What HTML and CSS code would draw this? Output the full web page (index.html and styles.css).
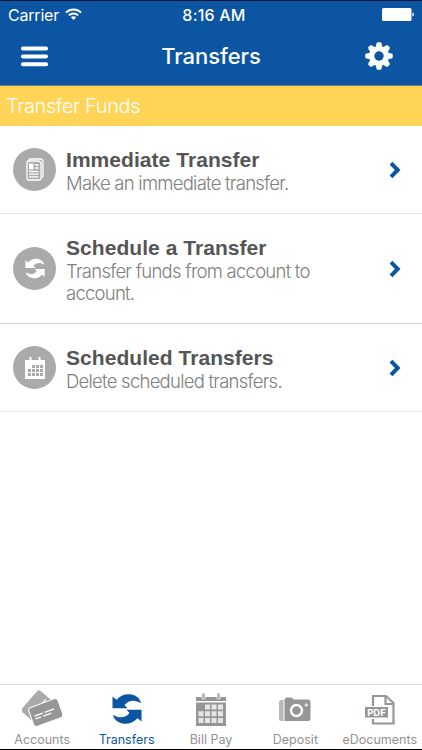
FILE: index.html
```html
<!DOCTYPE html>
<html lang="en">
<head>
  <meta charset="UTF-8">
  <meta name="viewport" content="width=device-width, initial-scale=1">
  <title>Transfers</title>
  <link rel="stylesheet" href="styles.css">
</head>
<body>
  <svg class="sprite" width="0" height="0">
    <symbol id="swap" viewBox="0 0 30 30">
      <path d="M.5 2.500L4.500 5.800C9 .8 14.500-.3 19.500.6C24.500 1.500 28 4.600 29 9.200C23 5.200 16.500 6 12.500 11L15.500 14.300H.5Z"/>
      <path d="M29.500 27.500L25.500 24.200C21 29.200 15.500 30.300 10.500 29.400C5.500 28.500 2 25.400 1 20.800C7 24.800 13.500 24 17.500 19L14.500 15.700H29.500Z"/>
    </symbol>
    <symbol id="chevron" viewBox="0 0 12 18">
      <path d="M2 2.200L8.700 9L2 15.800" fill="none" stroke="#0b55a2" stroke-width="4"/>
    </symbol>
  </svg>

  <div class="app">
    <header class="header">
      <div class="status">
        <div class="carrier">
          <span class="carrier-name">Carrier</span>
          <svg width="17" height="13" viewBox="0 0 17 13" fill="none" stroke="#fff" stroke-width="2">
            <path d="M1 4.500C5 .4 12 .4 16 4.500M3.800 7.400C6.500 4.800 10.500 4.800 13.200 7.400"/>
            <path d="M5.800 9.300C7.400 7.900 9.600 7.900 11.200 9.300L8.500 12Z" fill="#fff" stroke="none"/>
          </svg>
        </div>
        <span class="time">8:16 AM</span>
        <svg class="battery" width="33" height="13" viewBox="0 0 33 13" fill="#fff">
          <rect width="29.500" height="13" rx="1.500"/>
          <path d="M30.500 4.500Q32 5 32 6.500T30.500 8.500Z"/>
        </svg>
      </div>
      <div class="nav">
        <svg width="27" height="21" viewBox="0 0 27 21" fill="#fff">
          <rect y="0.500" width="27" height="4" rx="1.800"/>
          <rect y="8.400" width="27" height="4" rx="1.800"/>
          <rect y="16.300" width="27" height="4" rx="1.800"/>
        </svg>
        <h1 class="nav-title">Transfers</h1>
        <svg width="28" height="28" viewBox="-14 -14 28 28">
          <g fill="#fff">
            <circle r="9.500"/>
            <path id="tooth" d="M-3.800-8L-2.200-13.400Q0-14.200 2.200-13.400L3.800-8Z"/>
            <use href="#tooth" transform="rotate(45)"/>
            <use href="#tooth" transform="rotate(90)"/>
            <use href="#tooth" transform="rotate(135)"/>
            <use href="#tooth" transform="rotate(180)"/>
            <use href="#tooth" transform="rotate(225)"/>
            <use href="#tooth" transform="rotate(270)"/>
            <use href="#tooth" transform="rotate(315)"/>
          </g>
          <circle r="4.700" fill="#0b55a2"/>
        </svg>
      </div>
    </header>

    <h2 class="section">Transfer Funds</h2>

    <main class="list">
      <a class="row">
        <span class="badge">
          <svg width="18" height="23" viewBox="0 0 18 23" fill="none" stroke="#fff" stroke-width="1.300">
            <path d="M3 3V2Q3 1 4 1H14Q17 1 17 4.500V18Q17 19 16 19"/>
            <path d="M2.500 3H11.500Q15 3 15 6V20.500Q15 22 13.500 22H2.500Q1 22 1 20.500V4.500Q1 3 2.500 3Z"/>
            <path d="M3 5.500H7.500V11.500H3Z" fill="#fff" stroke="none"/>
            <path d="M9 7H12.500M9 10H12.500M3 13.500H12.500M3 16.200H12.500M3 18.900H12.500"/>
          </svg>
        </span>
        <span class="text">
          <span class="title">Immediate Transfer</span>
          <span class="desc">Make an immediate transfer.</span>
        </span>
        <svg class="arrow"><use href="#chevron"/></svg>
      </a>
      <a class="row row-tall">
        <span class="badge">
          <svg width="20" height="21" fill="#fff"><use href="#swap"/></svg>
        </span>
        <span class="text">
          <span class="title">Schedule a Transfer</span>
          <span class="desc">Transfer funds from account to account.</span>
        </span>
        <svg class="arrow"><use href="#chevron"/></svg>
      </a>
      <a class="row">
        <span class="badge">
          <svg width="20" height="22" viewBox="0 0 20 22">
            <path d="M0 3H20V22H0ZM4.500 0H6.500V4H4.500ZM13.500 0H15.500V4H13.500Z" fill="#fff"/>
            <path d="M7 8H10V11H7ZM11 8H14V11H11ZM15 8H18V11H15ZM3 12H6V15H3ZM7 12H10V15H7ZM11 12H14V15H11ZM15 12H18V15H15ZM3 16H6V19H3ZM7 16H10V19H7ZM11 16H14V19H11ZM15 16H18V19H15Z" fill="#aaa"/>
          </svg>
        </span>
        <span class="text">
          <span class="title">Scheduled Transfers</span>
          <span class="desc">Delete scheduled transfers.</span>
        </span>
        <svg class="arrow"><use href="#chevron"/></svg>
      </a>
    </main>

    <footer class="tabs">
      <a class="tab">
        <svg width="40" height="38" viewBox="0 0 40 38">
          <g transform="rotate(-49 15 15)">
            <rect x="0" y="6" width="28" height="20" rx="2.500" fill="#aaa"/>
            <path d="M3 18H14M3 21.500H10M16 18H25M13 21.500H22" stroke="#fff" stroke-width="1.300"/>
          </g>
          <g transform="rotate(-20 24 23)">
            <rect x="8.500" y="12.500" width="31" height="20" rx="3" fill="#969696" stroke="#fff"/>
            <path d="M12 22H21M23 22H33M12 25H18M20 25H29" stroke="#fff" stroke-width="1.300"/>
          </g>
        </svg>
        <span>Accounts</span>
      </a>
      <a class="tab active">
        <svg width="30" height="38" fill="#0b55a2"><use href="#swap" y="4" width="30" height="30"/></svg>
        <span>Transfers</span>
      </a>
      <a class="tab">
        <svg width="30" height="38" viewBox="0 0 30 38">
          <path d="M0 7H30V11H0ZM0 12.500H30V36H0Z" fill="#969696"/>
          <path d="M6 3H9V9H6ZM21 3H24V9H21Z" fill="#aaa" stroke="#fff" stroke-width=".6"/>
          <path d="M9 14.500H14V19.500H9ZM15.500 14.500H20.500V19.500H15.500ZM22 14.500H27V19.500H22ZM2.500 21.300H7.500V26.300H2.500ZM9 21.300H14V26.300H9ZM15.500 21.300H20.500V26.300H15.500ZM22 21.300H27V26.300H22ZM2.500 28H7.500V33H2.500ZM9 28H14V33H9ZM15.500 28H20.500V33H15.500ZM22 28H27V33H22Z" fill="#e5e5e5"/>
        </svg>
        <span>Bill Pay</span>
      </a>
      <a class="tab">
        <svg width="32" height="38" viewBox="0 0 32 38">
          <path d="M0 12Q0 10 2 10H4.500V31H2Q0 31 0 29Z" fill="#b8b8b8"/>
          <path d="M5.500 9.500L7 7.500H13L14.500 9.500H29Q31.500 9.500 31.500 12V28.500Q31.500 31 29 31H5.500Z" fill="#969696"/>
          <circle cx="17.500" cy="20.500" r="5.500" fill="none" stroke="#fff" stroke-width="2.400"/>
          <circle cx="27.300" cy="15" r="1.700" fill="#e5e5e5"/>
        </svg>
        <span>Deposit</span>
      </a>
      <a class="tab">
        <svg width="32" height="38" viewBox="0 0 32 38">
          <path d="M9 16V6H22L29.500 13V33.500H9V29M21.500 6V14H29" fill="none" stroke="#969696" stroke-width="2.200"/>
          <rect x="1" y="17" width="23" height="10.500" fill="#969696"/>
          <text class="pdf" x="12.500" y="25.500" text-anchor="middle">PDF</text>
        </svg>
        <span>eDocuments</span>
      </a>
    </footer>
  </div>
</body>
</html>
```
FILE: styles.css
```css
* {
  box-sizing: border-box;
}
body {
  margin: 0;
  font-family: Inter, "Liberation Sans", sans-serif;
  background: #fff;
}
.sprite {
  display: block;
}
.app {
  display: flex;
  flex-direction: column;
  height: 750px;
  border-top: 1px solid #07133b;
  border-bottom: 1px solid #000;
}
.header {
  height: 85px;
  background: #0b55a2;
  border-bottom: 1px solid #687f80;
  color: #fff;
}
.status {
  display: grid;
  grid-template-columns: 1fr auto 1fr;
  align-items: center;
  height: 27px;
  padding: 0 7px 0 8px;
  font-size: 16px;
}
.carrier {
  display: flex;
  align-items: center;
  gap: 6px;
}
.carrier-name {
  letter-spacing: -0.2px;
}
.time {
  padding-left: 5px;
  font-weight: 500;
  letter-spacing: 0.2px;
}
.battery {
  justify-self: end;
}
.nav {
  display: flex;
  align-items: center;
  justify-content: space-between;
  height: 56px;
  padding: 0 29px 0 21px;
}
.nav-title {
  margin: 0;
  padding-left: 9px;
  font-size: 22px;
  font-weight: 500;
  letter-spacing: -0.05px;
}
.section {
  height: 40px;
  margin: 0;
  padding-left: 6px;
  background: #ffd457;
  color: #fff;
  font-size: 20px;
  font-weight: 300;
  line-height: 41px;
  letter-spacing: -0.4px;
}
.list {
  flex: 1;
}
.row {
  display: flex;
  align-items: center;
  height: 88px;
  padding: 0 21px 0 13px;
  border-bottom: 1px solid #e3e3e3;
}
.row-tall {
  height: 110px;
  border-bottom-color: #d5d5d5;
}
.badge {
  display: flex;
  align-items: center;
  justify-content: center;
  width: 43px;
  height: 43px;
  border-radius: 50%;
  background: #aaa;
}
.text {
  flex: 1;
  padding: 1px 60px 0 10px;
}
.title {
  display: block;
  color: #555;
  font: bold 21px/25px "Liberation Sans", Arial, sans-serif;
  letter-spacing: 0.05px;
}
.desc {
  display: block;
  color: #808080;
  font-size: 18.5px;
  font-weight: 300;
  line-height: 22px;
  letter-spacing: -0.75px;
}
.arrow {
  width: 12px;
  height: 18px;
}
.tabs {
  display: grid;
  grid-template-columns: repeat(5, 1fr);
  height: 65px;
  border-top: 1px solid #ddd;
}
.tab {
  display: flex;
  flex-direction: column;
  align-items: center;
  padding-top: 5px;
  color: #929292;
  font-size: 12.5px;
  line-height: 24px;
}
.tab svg {
  flex-shrink: 0;
}
.active {
  color: #0b55a2;
}
.pdf {
  fill: #fff;
  font-size: 9.5px;
  font-weight: 700;
}
```
